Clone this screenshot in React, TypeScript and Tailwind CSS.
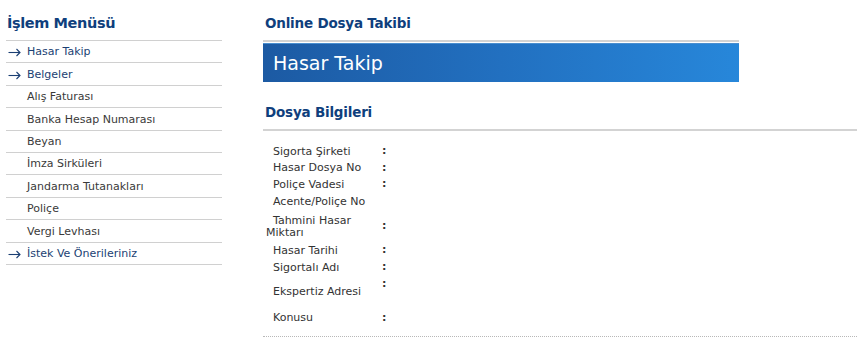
const menu = [
  { label: 'Hasar Takip', arrow: true },
  { label: 'Belgeler', arrow: true },
  { label: 'Alış Faturası' },
  { label: 'Banka Hesap Numarası' },
  { label: 'Beyan' },
  { label: 'İmza Sirküleri' },
  { label: 'Jandarma Tutanakları' },
  { label: 'Poliçe' },
  { label: 'Vergi Levhası' },
  { label: 'İstek Ve Önerileriniz', arrow: true },
];

const fields: { label: string; h: string; colonTop?: boolean; noColon?: boolean }[] = [
  { label: 'Sigorta Şirketi', h: 'h-[17px]' },
  { label: 'Hasar Dosya No', h: 'h-[16px]' },
  { label: 'Poliçe Vadesi', h: 'h-[17px]' },
  { label: 'Acente/Poliçe No', h: 'h-[18px]', noColon: true },
  { label: 'Tahmini Hasar Miktarı', h: 'h-[31px]' },
  { label: 'Hasar Tarihi', h: 'h-[17px]' },
  { label: 'Sigortalı Adı', h: 'h-[17px]' },
  { label: 'Ekspertiz Adresi', h: 'h-[32px]', colonTop: true },
  { label: 'Konusu', h: 'h-[20px]' },
];

function Arrow() {
  return (
    <svg width="13" height="9" viewBox="0 0 13 9" fill="none" stroke="#1b3f73" strokeWidth="1.1">
      <path d="M0.5 4.5H12" />
      <path d="M8.5 1L12 4.5L8.5 8" />
    </svg>
  );
}

export default function App() {
  return (
    <div className="flex bg-white w-[857px] h-[349px] overflow-hidden text-[11px] text-[#333]" style={{ fontFamily: '"DejaVu Sans", Verdana, sans-serif' }}>
      {/* sol menü */}
      <div className="w-[216px] ml-[6px] pt-[13px] shrink-0">
        <h2 className="font-bold text-[14.5px] tracking-[-0.4px] text-[#0f3f7d] pl-[1px] leading-[20px] mb-[7px]">İşlem Menüsü</h2>
        <ul className="border-t border-[#d0d0d0]">
          {menu.map(m => (
            <li key={m.label} className="h-[22.4px] pt-[2px] border-b border-[#d0d0d0] flex items-center">
              <span className="w-[21px] flex pl-[2px]">
                {m.arrow && <Arrow />}
              </span>
              <span className={m.arrow ? 'text-[#1b3f73]' : 'text-[#3a3a3a]'}>{m.label}</span>
            </li>
          ))}
        </ul>
      </div>

      {/* içerik */}
      <div className="flex-1 ml-[41px] pt-[14px]">
        <h1 className="font-bold text-[13.5px] tracking-[-0.2px] text-[#0f3f7d] pl-[2px] leading-[18px] mb-[8px]">Online Dosya Takibi</h1>
        <div className="w-[476px] border-t-2 border-[#d3d3d3]">
          <div className="mt-[1px] h-[39px] bg-gradient-to-r from-[#1c5aa3] via-[#2270c0] to-[#2787da] border-t border-[#4a8fd0] flex items-center pl-[10px]">
            <span className="text-white text-[19px] leading-none">Hasar Takip</span>
          </div>
        </div>

        <h3 className="font-bold text-[13.5px] tracking-[-0.2px] text-[#0f3f7d] pl-[2px] leading-[18px] mt-[21px] mb-[8px]">Dosya Bilgileri</h3>
        <div className="border-t-2 border-[#d3d3d3] pt-[12px]">
          {fields.map(f => (
            <div key={f.label} className={`flex ${f.h}`}>
              <div className="w-[116px] ml-[3px] indent-[7px] leading-[12px] flex items-center">{f.label}</div>
              <div className={`flex font-bold ${f.colonTop ? 'items-start' : 'items-center'}`}>{f.noColon ? '' : ':'}</div>
            </div>
          ))}
          <div className="mt-[8px] border-t border-dotted border-[#b8b8b8]" />
        </div>
      </div>
    </div>
  );
}
